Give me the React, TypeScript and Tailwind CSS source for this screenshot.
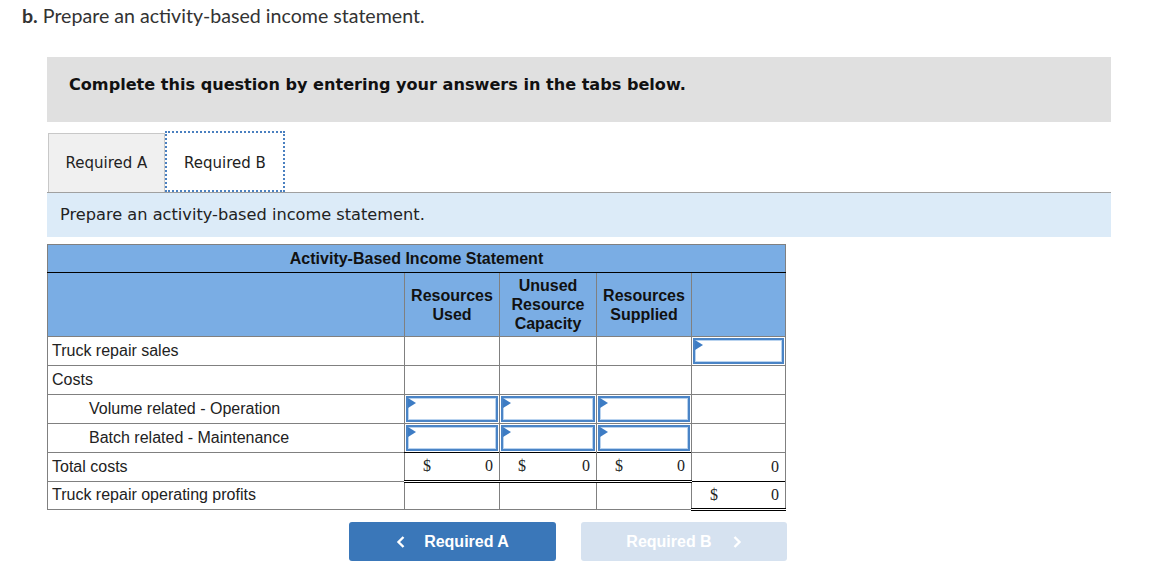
import React from 'react';

const Flag = () => (
  <svg className="absolute left-0 top-0" width="8" height="10" viewBox="0 0 8 10">
    <polygon points="0,0 8,5 0,10" fill="#3d7cc4" />
  </svg>
);

const InputCell: React.FC = () => (
  <div className="relative h-[26px] border-2 border-[#4a84c6] bg-white shadow-[inset_0_0_0_1px_#b9d3ef]">
    <Flag />
  </div>
);

const Amount: React.FC<{ dollar?: boolean; value: string }> = ({ dollar, value }) => (
  <div className="flex justify-between px-[6px] pl-[18px] font-['Liberation_Serif',serif] text-[16px]">
    <span>{dollar ? '$' : ''}</span>
    <span>{value}</span>
  </div>
);

export default function App() {
  const cell = 'border border-[#808080] p-0 h-[28.8px]';
  const label = 'font-["Liberation_Sans",Arial,sans-serif] text-[16px] text-[#222]';

  return (
    <div className="w-[1171px] h-[576px] bg-white text-[#222] overflow-hidden">
      {/* Title */}
      <div className="pl-[22px] pt-[1px] h-[57px] font-['Lato',sans-serif] text-[19.6px] text-[#333]">
        <span className="font-bold">b.</span> Prepare an activity-based income statement.
      </div>

      <div className="ml-[47px] w-[1064px]">
        {/* Instruction box */}
        <div className="h-[65px] bg-[#e0e0e0] flex items-center pl-[22px] pb-[18px] pt-[9px]">
          <span className="font-['DejaVu_Sans',Verdana,sans-serif] font-bold text-[16.1px] text-[#111]">
            Complete this question by entering your answers in the tabs below.
          </span>
        </div>

        {/* Tabs */}
        <div className="mt-[9px] flex items-end border-b border-[#a0a0a0]">
          <div className="ml-px w-[117px] h-[59px] bg-[#f0f0f0] border border-b-0 border-[#c8c8c8] flex items-center justify-center font-['DejaVu_Sans',Verdana,sans-serif] text-[15px] text-[#222]">
            Required A
          </div>
          <div className="w-[120px] h-[61px] pt-[3px] bg-white border-2 border-dotted border-[#4a80c0] flex items-center justify-center font-['DejaVu_Sans',Verdana,sans-serif] text-[15px] text-[#222]">
            Required B
          </div>
        </div>
        <div className="h-[44px] bg-[#dcebf8] flex items-center pl-[13px] font-['DejaVu_Sans',Verdana,sans-serif] text-[16.2px] text-[#222]">
          Prepare an activity-based income statement.
        </div>

        {/* Table */}
        <table className="mt-[7px] border-collapse w-[738px] table-fixed">
          <colgroup>
            <col className="w-[357px]" />
            <col className="w-[95px]" />
            <col className="w-[97px]" />
            <col className="w-[95px]" />
            <col className="w-[94px]" />
          </colgroup>
          <thead>
            <tr>
              <th colSpan={5} className="h-[28px] p-0 bg-[#7aade4] border border-[#808080] border-b-black font-['Liberation_Sans',Arial,sans-serif] text-[16px] font-bold text-[#111] text-center">
                Activity-Based Income Statement
              </th>
            </tr>
            <tr className="bg-[#7aade4] font-['Liberation_Sans',Arial,sans-serif] text-[16px] font-bold text-[#111] leading-[19px]">
              <th className="h-[64px] p-0 border border-[#808080] border-t-black"></th>
              <th className="p-0 border border-[#808080] border-t-black text-center">Resources<br />Used</th>
              <th className="p-0 border border-[#808080] border-t-black text-center">Unused<br />Resource<br />Capacity</th>
              <th className="p-0 border border-[#808080] border-t-black text-center">Resources<br />Supplied</th>
              <th className="p-0 border border-[#808080] border-t-black"></th>
            </tr>
          </thead>
          <tbody className={label}>
            <tr>
              <td className={`${cell} pl-[4px]`}>Truck repair sales</td>
              <td className={cell}></td>
              <td className={cell}></td>
              <td className={cell}></td>
              <td className={`${cell} p-px`}><InputCell /></td>
            </tr>
            <tr>
              <td className={`${cell} pl-[4px]`}>Costs</td>
              <td className={cell}></td>
              <td className={cell}></td>
              <td className={cell}></td>
              <td className={cell}></td>
            </tr>
            <tr>
              <td className={`${cell} pl-[41px]`}>Volume related - Operation</td>
              <td className={`${cell} p-px`}><InputCell /></td>
              <td className={`${cell} p-px`}><InputCell /></td>
              <td className={`${cell} p-px`}><InputCell /></td>
              <td className={cell}></td>
            </tr>
            <tr>
              <td className={`${cell} pl-[41px]`}>Batch related - Maintenance</td>
              <td className={`${cell} p-px`}><InputCell /></td>
              <td className={`${cell} p-px`}><InputCell /></td>
              <td className={`${cell} p-px`}><InputCell /></td>
              <td className={cell}></td>
            </tr>
            <tr>
              <td className={`${cell} pl-[4px]`}>Total costs</td>
              <td className={`${cell} border-t-black border-b-[3px] border-b-black border-double`}><Amount dollar value="0" /></td>
              <td className={`${cell} border-t-black border-b-[3px] border-b-black border-double`}><Amount dollar value="0" /></td>
              <td className={`${cell} border-t-black border-b-[3px] border-b-black border-double`}><Amount dollar value="0" /></td>
              <td className={`${cell} border-b-black`}><Amount value="0" /></td>
            </tr>
            <tr>
              <td className={`${cell} pl-[4px]`}>Truck repair operating profits</td>
              <td className={cell}></td>
              <td className={cell}></td>
              <td className={cell}></td>
              <td className={`${cell} border-t-black border-b-[3px] border-b-black border-double`}><Amount dollar value="0" /></td>
            </tr>
          </tbody>
        </table>
      </div>

      {/* Navigation buttons */}
      <div className="mt-[11px] ml-[349px] flex gap-[25px] font-['Liberation_Sans',Arial,sans-serif] text-[16px] font-bold text-white">
        <button className="w-[207px] h-[39px] rounded-[3px] bg-[#3a77b9] flex items-center justify-center gap-[18px]">
          <svg width="10" height="14" viewBox="0 0 10 14"><path d="M7.5 2 L2.5 7 L7.5 12" stroke="white" strokeWidth="2.4" fill="none" /></svg>
          <span>Required A</span>
        </button>
        <button className="w-[206px] h-[39px] rounded-[3px] bg-[#d6e2f0] flex items-center justify-center gap-[20px]">
          <span>Required B</span>
          <svg width="10" height="14" viewBox="0 0 10 14"><path d="M2.5 2 L7.5 7 L2.5 12" stroke="white" strokeWidth="2.4" fill="none" /></svg>
        </button>
      </div>
    </div>
  );
}
